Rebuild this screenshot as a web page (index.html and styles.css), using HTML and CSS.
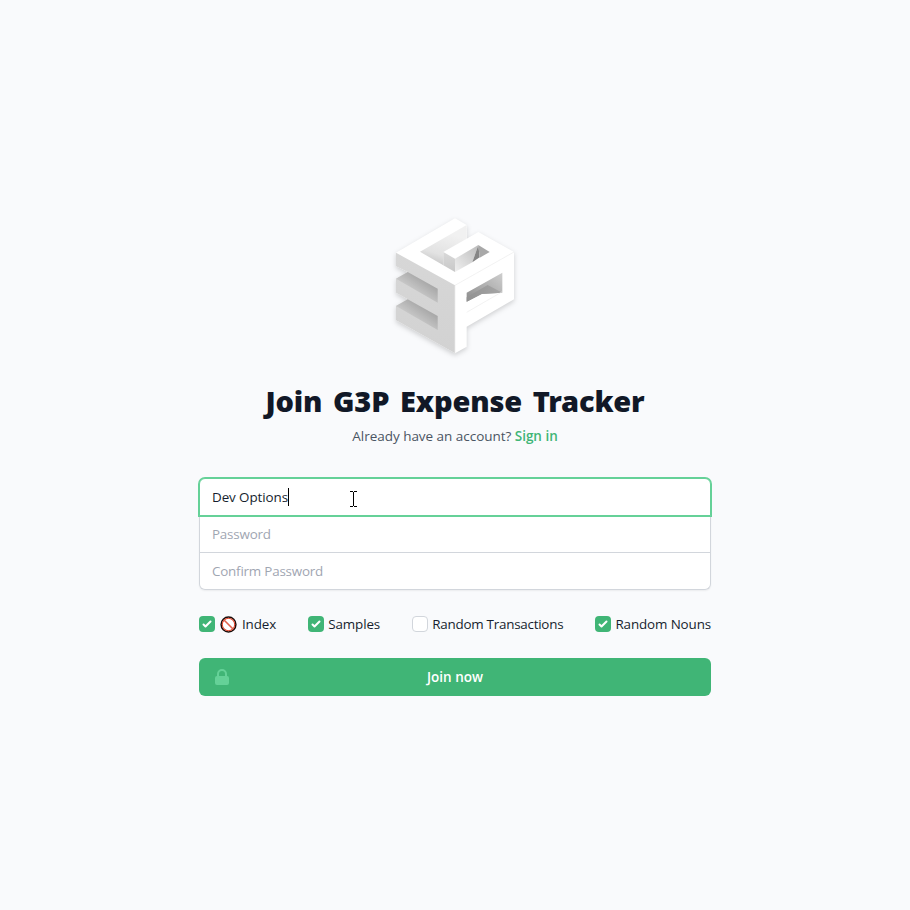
FILE: index.html
```html
<!DOCTYPE html>
<html lang="en">
<head>
<meta charset="utf-8">
<title>Join G3P Expense Tracker</title>
<link rel="stylesheet" href="styles.css">
</head>
<body>
<main class="panel">
  <svg class="logo" viewBox="0 0 420 450" aria-hidden="true">
    <defs>
      <linearGradient id="side" x1="0" y1="0" x2="0" y2="1"><stop offset="0" stop-color="#d7d7d7"/><stop offset="1" stop-color="#d2d2d2"/></linearGradient>
      <linearGradient id="slot" gradientUnits="userSpaceOnUse" x1="105" y1="195" x2="72" y2="243"><stop offset="0" stop-color="#a4a4a4"/><stop offset="1" stop-color="#cecece"/></linearGradient>
      <linearGradient id="wall" gradientUnits="userSpaceOnUse" x1="160" y1="170" x2="190" y2="70"><stop offset="0" stop-color="#c5c5c5"/><stop offset=".35" stop-color="#e2e2e2"/><stop offset="1" stop-color="#f1f1f1"/></linearGradient>
      <linearGradient id="front" x1="0" y1="0" x2="0" y2="1"><stop offset="0" stop-color="#d9d9d9"/><stop offset="1" stop-color="#c8c8c8"/></linearGradient>
      <linearGradient id="hole" x1="0" y1="1" x2="1" y2="0"><stop offset="0" stop-color="#f0f0f0"/><stop offset="1" stop-color="#bcbcbc"/></linearGradient>
      <linearGradient id="window" x1="0" y1="1" x2="1" y2="0"><stop offset="0" stop-color="#8c8c8c"/><stop offset=".5" stop-color="#aeaeae"/><stop offset="1" stop-color="#cfcfcf"/></linearGradient>
      <linearGradient id="floor" x1="0" y1="0" x2="1" y2="0"><stop offset="0" stop-color="#929292"/><stop offset="1" stop-color="#a6a6a6"/></linearGradient>
    </defs>
    <g class="cube">
      <path fill="#fff" d="M33 128 210 25 245 45V86L280 66 387 126V268L245 350V410L210 430 33 331V288L68 268 33 248V206L68 186 33 169Z"/>
      <path fill="url(#side)" d="M33 128 210 226V430L33 331V288L68 268 33 248V206L68 186 33 169Z"/>
      <path fill="url(#slot)" d="M68 186 158 236V278L33 206Z"/>
      <path fill="url(#slot)" transform="translate(0 82)" d="M68 186 158 236V278L33 206Z"/>
      <path fill="url(#wall)" d="M105 125 245 45V86L175 126V166Z"/>
      <path fill="url(#front)" d="M175 126 210 146V186L175 166Z"/>
      <path fill="url(#hole)" d="M210 146 280 105 262 157 210 186Z"/>
      <path fill="#858585" d="M280 105 284 142 262 157Z"/>
      <path fill="#a8a8a8" d="M280 105 314 126 284 143Z"/>
      <path fill="url(#window)" d="M245 248 352 188V248L290 252 245 275Z"/>
      <path fill="url(#floor)" d="M308 225 352 248 290 252 245 275V262Z"/>
      <path class="edge" d="M210 226 387 126M210 226V430M245 307 352 245"/>
    </g>
  </svg>
  <h1 class="title">Join G3P Expense Tracker</h1>
  <p class="lead">Already have an account? <a class="signin">Sign in</a></p>
  <form class="form">
    <div class="fields">
      <div class="field focused"><span class="value">Dev Options</span><i class="caret"></i>
        <svg class="pointer" viewBox="0 0 7 17"><path d="M0 .5H3M4 .5H7M3.5 1V15M0 15.5H3M4 15.5H7"/></svg>
      </div>
      <div class="field middle"><span class="hint">Password</span></div>
      <div class="field last"><span class="hint">Confirm Password</span></div>
    </div>
    <div class="options">
      <label class="option"><span class="box on"><svg viewBox="0 0 16 16"><path d="M12.207 4.793a1 1 0 010 1.414l-5 5a1 1 0 01-1.414 0l-2-2a1 1 0 011.414-1.414L6.5 9.086l4.293-4.293a1 1 0 011.414 0z"/></svg></span>
        <svg class="ban" viewBox="0 0 17 17"><circle cx="8.5" cy="8.5" r="7.4" fill="#fff" stroke="#1b0d0b" stroke-width="1.5"/><circle cx="8.5" cy="8.5" r="6.2" fill="none" stroke="#e0492f" stroke-width="1.1"/><path d="M4 4 13 13" stroke="#e0604c" stroke-width="1.6"/></svg>
        <span>Index</span></label>
      <label class="option"><span class="box on"><svg viewBox="0 0 16 16"><path d="M12.207 4.793a1 1 0 010 1.414l-5 5a1 1 0 01-1.414 0l-2-2a1 1 0 011.414-1.414L6.5 9.086l4.293-4.293a1 1 0 011.414 0z"/></svg></span><span>Samples</span></label>
      <label class="option"><span class="box"></span><span class="wide">Random Transactions</span></label>
      <label class="option"><span class="box on"><svg viewBox="0 0 16 16"><path d="M12.207 4.793a1 1 0 010 1.414l-5 5a1 1 0 01-1.414 0l-2-2a1 1 0 011.414-1.414L6.5 9.086l4.293-4.293a1 1 0 011.414 0z"/></svg></span><span>Random Nouns</span></label>
    </div>
    <button class="submit" type="button">
      <svg class="lock" viewBox="0 0 20 20"><path fill-rule="evenodd" d="M5 9V7a5 5 0 0110 0v2a2 2 0 012 2v5a2 2 0 01-2 2H5a2 2 0 01-2-2v-5a2 2 0 012-2zm8-2v2H7V7a3 3 0 016 0z"/></svg>
      <span>Join now</span>
    </button>
  </form>
</main>
</body>
</html>
```
FILE: styles.css
```css
* { box-sizing: border-box; }
body {
  margin: 0;
  height: 910px;
  background: #f9fafc;
  color: #161e2e;
  font: 14px/20px "Open Sans", "Noto Sans", sans-serif;
}
.panel {
  width: 512px;
  margin: 0 auto;
  padding-top: 210px;
  display: flex;
  flex-direction: column;
  align-items: center;
}
.logo { display: block; width: 140px; height: 150px; overflow: visible; }
.cube { filter: drop-shadow(0 6px 8px rgba(0, 0, 0, .17)); }
.edge { fill: none; stroke: #ececec; stroke-width: 2; }
.title {
  margin: 23px 0 0;
  color: #111827;
  font: 900 29px/36px "Noto Sans", "Open Sans", sans-serif;
  letter-spacing: -.18px;
  word-spacing: 3.4px;
  white-space: nowrap;
}
.lead { margin: 7px 0 0; color: #4b5563; font-size: 13.5px; letter-spacing: -.03px; white-space: nowrap; }
.signin { color: #40b576; font-weight: 600; }
.form { width: 512px; margin-top: 32px; }
.fields {
  height: 112px;
  border-radius: 6px;
  box-shadow: 0 1px 2px rgba(0, 0, 0, .06);
}
.field {
  height: 36px;
  padding: 0 12px;
  display: flex;
  align-items: center;
  background: #fff;
  border: solid #d2d6dc;
  border-width: 0 1px 1px;
  font-size: 13.4px;
}
.focused {
  position: relative;
  height: 38px;
  border: 1px solid #65d198;
  box-shadow: 0 0 0 1px #65d198;
  border-radius: 6px 6px 0 0;
}
.value { letter-spacing: -.08px; }
.middle { height: 37px; }
.last { height: 37px; border-radius: 0 0 6px 6px; }
.hint { color: #9fa6b2; letter-spacing: -.2px; }
.caret { width: 1px; height: 18px; background: #000; }
.pointer {
  position: absolute;
  left: 150px;
  top: 12px;
  width: 7px;
  height: 17px;
  fill: none;
  stroke: #000;
  shape-rendering: crispEdges;
}
.options {
  height: 20px;
  margin-top: 24px;
  display: flex;
  justify-content: space-between;
}
.option {
  display: flex;
  align-items: center;
  gap: 4px;
  font-size: 13.4px;
  letter-spacing: -.12px;
  white-space: nowrap;
}
.wide { letter-spacing: -.24px; }
.box {
  width: 16px;
  height: 16px;
  border: 1px solid #d2d6dc;
  border-radius: 4px;
  background: #fff;
}
.on { border: 0; background: #40b576; }
.on svg { display: block; fill: #fff; }
.ban { width: 17px; height: 17px; margin: 0 1px; }
.submit {
  width: 100%;
  height: 38px;
  margin-top: 24px;
  padding: 0;
  position: relative;
  display: flex;
  align-items: center;
  justify-content: center;
  border: 0;
  border-radius: 6px;
  background: #40b576;
  color: #fff;
  font: 600 13.5px/20px "Open Sans", "Noto Sans", sans-serif;
}
.lock { position: absolute; left: 13px; top: 9px; width: 20px; height: 20px; fill: #65d198; }
```
